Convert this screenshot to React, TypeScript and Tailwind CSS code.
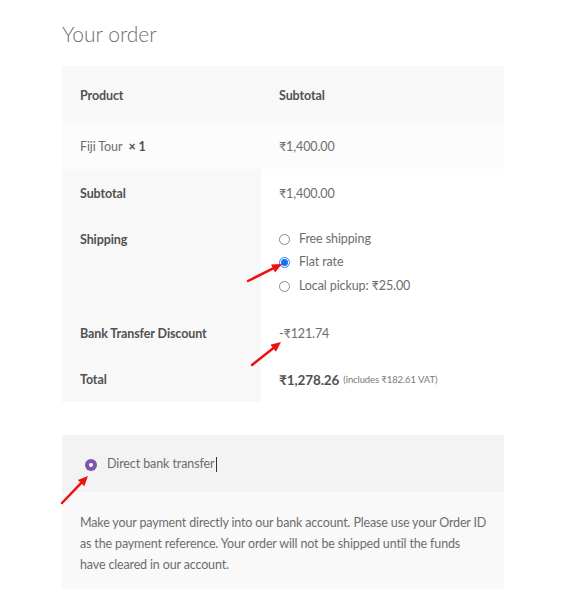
import React from 'react';

const font = { fontFamily: 'Lato, "Noto Sans", sans-serif' };

function Arrow({ x1, y1, x2, y2 }: { x1: number; y1: number; x2: number; y2: number }) {
  const a = Math.atan2(y2 - y1, x2 - x1);
  const len = 10;
  const w = 4.5;
  const bx = x2 - len * Math.cos(a);
  const by = y2 - len * Math.sin(a);
  const px = -Math.sin(a) * w;
  const py = Math.cos(a) * w;
  return (
    <g>
      <line x1={x1} y1={y1} x2={bx} y2={by} stroke="#f01010" strokeWidth={2.5} strokeLinecap="round" />
      <polygon points={`${x2},${y2} ${bx + px},${by + py} ${bx - px},${by - py}`} fill="#f01010" />
    </g>
  );
}

function Radio({ checked }: { checked?: boolean }) {
  return checked ? (
    <span className="w-[11px] h-[11px] rounded-full border border-[#2f7bf5] bg-white flex items-center justify-center">
      <span className="w-[7px] h-[7px] rounded-full bg-[#1a6ff0]" />
    </span>
  ) : (
    <span className="w-[11px] h-[11px] rounded-full border border-[#8a8a8a] bg-white" />
  );
}

export default function App() {
  return (
    <div className="relative w-[561px] h-[589px] bg-white overflow-hidden text-[#6d6d6d] tracking-[-0.1px]" style={font}>
      <div className="px-[62px] pt-[20px]">
        <h3 className="text-[21px] font-light leading-[28px] text-[#6d6d6d] tracking-normal">Your order</h3>

        <div className="mt-[18px] w-[442px] text-[12.5px]">
          <div className="flex h-[57px] pt-[4px] bg-[#f8f8f8] items-center font-bold text-[#515151]">
            <div className="w-[199px] pl-[18px]">Product</div>
            <div className="pl-[18px]">Subtotal</div>
          </div>
          <div className="flex h-[46px] pt-[3px] bg-[#fcfcfc] items-center">
            <div className="w-[199px] pl-[18px]">
              Fiji Tour&nbsp; <strong className="font-bold text-[#515151]">× 1</strong>
            </div>
            <div className="pl-[18px]">₹1,400.00</div>
          </div>

          <div className="flex">
            <div className="w-[199px] bg-[#f8f8f8] font-bold text-[#515151]">
              <div className="h-[47px] pt-[4px] flex items-center pl-[18px]">Subtotal</div>
              <div className="h-[94px] pl-[18px] pt-[15px]">Shipping</div>
              <div className="h-[46px] pt-[3px] flex items-center pl-[18px]">Bank Transfer Discount</div>
              <div className="h-[46px] pt-[3px] flex items-center pl-[18px]">Total</div>
            </div>
            <div className="flex-1 bg-white">
              <div className="h-[47px] pt-[4px] flex items-center pl-[18px]">₹1,400.00</div>
              <div className="h-[94px] pl-[18px] pt-[14px] flex flex-col gap-[5.5px]">
                <label className="flex items-center gap-[9px] h-[18px]">
                  <Radio />
                  Free shipping
                </label>
                <label className="flex items-center gap-[9px] h-[18px]">
                  <Radio checked />
                  Flat rate
                </label>
                <label className="flex items-center gap-[9px] h-[18px]">
                  <Radio />
                  Local pickup: ₹25.00
                </label>
              </div>
              <div className="h-[46px] pt-[3px] flex items-center pl-[18px]">-₹121.74</div>
              <div className="h-[46px] pt-[3px] flex items-center pl-[18px]">
                <strong className="font-bold text-[13.5px] text-[#515151]">₹1,278.26</strong>
                <small className="ml-[4px] text-[9.5px] text-[#7a7a7a]">(includes ₹182.61 VAT)</small>
              </div>
            </div>
          </div>
        </div>

        <div className="mt-[33px] w-[442px] text-[12.5px]">
          <div className="h-[57px] pt-[2px] bg-[#f3f3f3] flex items-center pl-[23px] gap-[10px]">
            <span className="w-[12px] h-[12px] rounded-full bg-[#7f54b3] flex items-center justify-center">
              <span className="w-[4px] h-[4px] rounded-full bg-white" />
            </span>
            <span className="flex items-center">
              Direct bank transfer
              <span className="w-px h-[15px] bg-[#333] ml-px" />
            </span>
          </div>
          <div className="bg-[#f9f9f9] pl-[18px] pr-[8px] pt-[20px] pb-[20px] leading-[21px] tracking-[-0.15px]">
            Make your payment directly into our bank account. Please use your Order ID
            <br />
            as the payment reference. Your order will not be shipped until the funds
            <br />
            have cleared in our account.
          </div>
        </div>
      </div>

      <svg className="absolute inset-0 pointer-events-none" width="561" height="589">
        <Arrow x1={248} y1={281} x2={282} y2={264} />
        <Arrow x1={252} y1={365} x2={281} y2={342} />
        <Arrow x1={62} y1={503} x2={88} y2={476} />
      </svg>
    </div>
  );
}
